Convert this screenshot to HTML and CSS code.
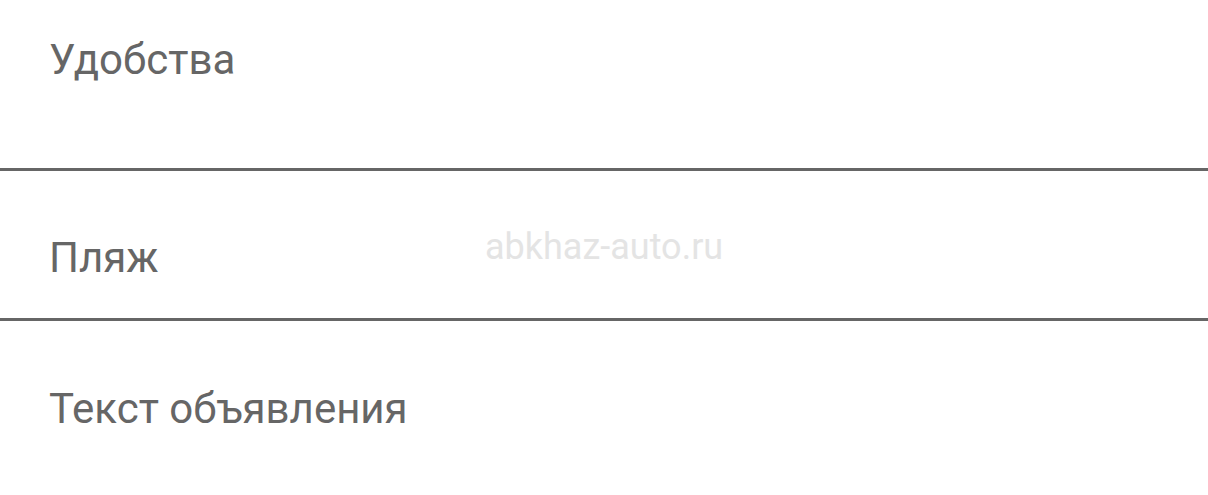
FILE: index.html
```html
<!DOCTYPE html>
<html lang="ru">
<head>
<meta charset="utf-8">
<link rel="stylesheet" href="styles.css">
</head>
<body>
<div class="page">
  <div class="field field-first"><span class="label">Удобства</span></div>
  <div class="field field-second"><span class="label">Пляж</span></div>
  <div class="field field-third"><span class="label">Текст объявления</span></div>
  <div class="watermark">abkhaz-auto.ru</div>
</div>
</body>
</html>
```
FILE: styles.css
```css
html, body {
  margin: 0;
  padding: 0;
  background: #ffffff;
}
.page {
  position: relative;
  width: 1208px;
  height: 495px;
  overflow: hidden;
  font-family: Roboto, "Noto Sans", sans-serif;
  color: #666666;
}
.field {
  display: flex;
  align-items: flex-start;
  padding-left: 49px;
  box-sizing: border-box;
}
.label {
  font-size: 42px;
  line-height: 48px;
}
.field-first {
  height: 171px;
  padding-top: 36px;
  border-bottom: 3px solid #666666;
}
.field-second {
  height: 150px;
  padding-top: 63px;
  border-bottom: 3px solid #666666;
}
.field-third {
  padding-top: 64px;
}
.watermark {
  position: absolute;
  left: 485px;
  top: 226px;
  font-size: 36px;
  color: #e4e4e4;
  font-family: Roboto, sans-serif;
}
```
